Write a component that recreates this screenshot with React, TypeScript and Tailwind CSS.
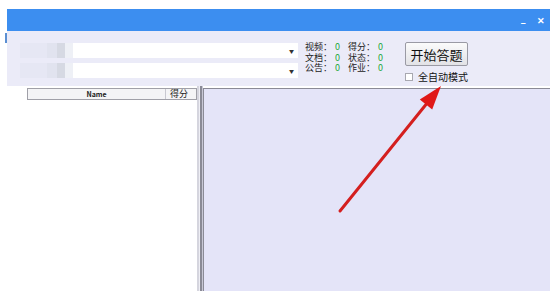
const font = { fontFamily: '"Noto Sans CJK SC", "Liberation Sans", sans-serif' }

const Combo = () => (
  <div className="flex h-[15px] w-[278px] items-stretch">
    <div className="w-[27px] bg-[#e6e7f4]" />
    <div className="w-[10px] bg-[#e1e3ef]" />
    <div className="w-[8px] bg-[#d6d9e3]" />
    <div className="w-[8px] bg-[#eef0f6]" />
    <div className="flex flex-1 items-center justify-end bg-white pr-[4px]">
      <span className="text-[5px] leading-none text-[#333]">▼</span>
    </div>
  </div>
)

const Stat = ({ label }: { label: string }) => (
  <div className="flex h-[10.5px] items-center">
    <span className="w-[30px]">{label}：</span>
    <span className="w-[13px] text-[#22a83a]">0</span>
  </div>
)

export default function App() {
  return (
    <div className="relative h-[291px] w-[550px] overflow-hidden bg-white" style={font}>
      <div className="flex h-full flex-col pl-[7px] pt-[9px]">
        <div className="flex h-[22px] items-center justify-end gap-[11px] bg-[#3c8ef0] pr-[5px] text-white">
          <span className="mt-[3px] text-[10px] font-bold leading-none">–</span>
          <span className="text-[9px] font-bold leading-none">✕</span>
        </div>

        <div className="relative flex h-[55px] bg-[#ebebf8] pl-[13px] pt-[12px]">
          <div className="absolute -left-[2px] top-[2px] h-[10px] w-[2px] bg-[#5b8fd2]" />
          <div className="flex flex-col gap-[5px]">
            <Combo />
            <Combo />
          </div>
          <div className="ml-[7px] -mt-[1px] flex text-[9px] leading-[10.5px] text-[#222]">
            <div className="flex flex-col">
              <Stat label="视频" />
              <Stat label="文档" />
              <Stat label="公告" />
            </div>
            <div className="flex flex-col">
              <Stat label="得分" />
              <Stat label="状态" />
              <Stat label="作业" />
            </div>
          </div>
          <div className="ml-[14px] -mt-[1px] flex flex-col">
            <button className="h-[24px] w-[63px] rounded-[2px] border border-[#9a9aa4] bg-gradient-to-b from-[#fbfbfb] to-[#e2e2e6] text-[13px] leading-none text-[#111]">
              开始答题
            </button>
            <div className="mt-[6px] flex items-center gap-[5px] text-[10px] leading-none text-[#111]">
              <div className="h-[8px] w-[8px] border border-[#a8a8b0] bg-white" />
              <span>全自动模式</span>
            </div>
          </div>
        </div>

        <div className="flex flex-1">
          <div className="w-[190px] bg-white pl-[20px] pt-[2px]">
            <div className="flex h-[12px] w-[170px] border border-[#a0a0a8] bg-[#f4f4f6] text-[7px] leading-[10px] text-[#222]">
              <div className="flex-1 border-r border-[#c8c8d0] text-center font-bold">Name</div>
              <div className="w-[30px] pl-[4px] text-[9px]">得分</div>
            </div>
          </div>
          <div className="flex w-[6px]">
            <div className="w-[2px] bg-[#d5d5de]" />
            <div className="w-[1px] bg-[#eeeef4]" />
            <div className="w-[2px] bg-[#8a8a96]" />
            <div className="w-[1px] bg-[#c8c8d6]" />
          </div>
          <div className="mt-[2px] flex-1 border-l border-t border-[#8a8a96] bg-[#e4e4f8]" />
        </div>
      </div>

      <svg className="pointer-events-none absolute left-0 top-0" width="550" height="291">
        <line x1="340" y1="211" x2="428" y2="102" stroke="#d41f1f" strokeWidth="3" strokeLinecap="round" />
        <polygon points="441,86 419.8,99.6 432.2,109.6" fill="#e01818" />
      </svg>
    </div>
  )
}
